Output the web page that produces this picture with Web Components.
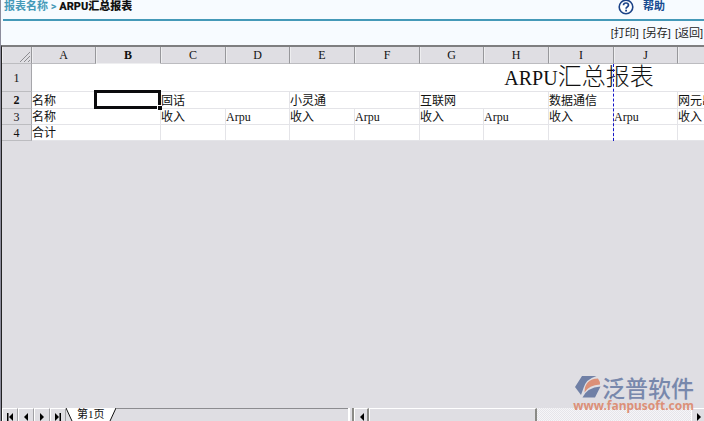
<!DOCTYPE html>
<html lang="zh-CN">
<head>
<meta charset="utf-8">
<title>ARPU汇总报表</title>
<style>
html, body { margin: 0; height: 100%; overflow: hidden; }
</style>
</head>
<body>
<report-page></report-page>

<template id="page-tpl">
<style>
:host { display: flex; flex-direction: column; height: 100vh; overflow: hidden; background: #f7fbff; border-left: 1px solid #8c8c9c; box-sizing: border-box; font: 12px/16px "Liberation Sans", "Noto Sans CJK SC", sans-serif; color: #111; }
sheet-grid { flex: 1; min-height: 0; }
</style>
<report-header></report-header>
<report-actions></report-actions>
<sheet-grid></sheet-grid>
<sheet-footer></sheet-footer>
<brand-mark></brand-mark>
</template>

<template id="header-tpl">
<style>
:host { display: flex; justify-content: space-between; align-items: flex-start; height: 19px; border-bottom: 2px solid #4499b8; margin-left: 2px; padding: 0 39px 0 1px; box-sizing: content-box; font-family: Roboto, "Noto Sans CJK SC", sans-serif; font-size: 11px; line-height: 14px; font-weight: bold; white-space: nowrap; }
nav a { color: #4499b8; text-decoration: none; }
nav span { color: #4499b8; }
b { color: #111; }
.help { display: flex; gap: 9px; color: #174c91; text-decoration: none; }
svg { display: block; width: 16px; height: 16px; margin-top: -1px; }
</style>
<nav><a href="#">报表名称</a> <span>&gt;</span> <b>ARPU汇总报表</b></nav>
<a class="help" href="#"><svg viewBox="0 0 16 16"><circle cx="8" cy="8" r="6.8" fill="#fff" stroke="#1c4388" stroke-width="1.6"/><path d="M5.5 6.2Q5.6 4 8 4T10.5 6.1Q10.5 7.2 9.2 7.9Q8.1 8.5 8.1 9.7" fill="none" stroke="#1c4388" stroke-width="1.7"/><rect x="7.2" y="10.7" width="1.8" height="1.8" fill="#1c4388"/></svg><span>帮助</span></a>
</template>

<template id="actions-tpl">
<style>
:host { display: flex; justify-content: flex-end; align-items: center; gap: 4px; height: 24px; padding-right: 1px; color: #222; }
button { all: unset; cursor: pointer; font-size: 11px; line-height: 16px; white-space: nowrap; }
</style>
<button>[打印]</button><button>[另存]</button><button>[返回]</button>
</template>

<template id="grid-tpl">
<style>
:host { display: block; overflow: hidden; background: #dfdee3; border-top: 2px solid #7e7e80; border-left: 1px solid #222; font: 12px/14px "Liberation Serif", "Noto Sans CJK SC", serif; color: #111; }
table { border-collapse: separate; border-spacing: 0; table-layout: fixed; width: 0; }
th, td { padding: 0; box-sizing: border-box; white-space: nowrap; }
th { background: #dfdee3; font-weight: normal; text-align: center; border-right: 1px solid #a6a6aa; border-bottom: 1px solid #bcbcc0; }
thead th { height: 17px; border-right-color: #97979b; box-shadow: inset 1px 0 #eeeef0; }
th.on { font-weight: bold; }
thead th.on { border-bottom-color: #eeeef0; }
td { background: #fff; border-right: 1px solid #e4e4e8; border-bottom: 1px solid #e4e4e8; position: relative; overflow: hidden; vertical-align: bottom; }
tr { height: 16px; }
tr.r1 { height: 28px; }
tr.r2 { height: 17px; }
.title { font-size: 20px; line-height: 26px; text-align: center; vertical-align: middle; padding-right: 4px; }
.title span { font-size: 24px; font-weight: 300; }
td.sel { overflow: visible; z-index: 1; }
.sel i { position: absolute; inset: -2px -1px -1px -2px; border: 3px solid #0b0b0d; }
.sel i::after { content: ""; position: absolute; right: -4px; bottom: -4px; width: 4px; height: 4px; background: #0b0b0d; border-top: 1px solid #fff; border-left: 1px solid #fff; }
.wrap { position: relative; width: max-content; }
.break { position: absolute; top: 17px; bottom: 0; left: 611px; border-left: 1px dashed #1616c8; }
svg { display: block; width: 12px; height: 12px; margin: 3px 0 0 auto; }
</style>
<div class="wrap"><table></table><div class="break"></div></div>
</template>

<template id="footer-tpl">
<style>
:host { display: flex; height: 13px; background: #dfdee3; border-left: 1px solid #222; overflow: hidden; }
button { all: unset; box-sizing: border-box; width: 16px; height: 13px; background: #dfdee3; border-right: 1px solid #a0a0a4; border-top: 1px solid #fff; border-left: 1px solid #fff; flex: none; }
svg { display: block; }
button svg { width: 8px; height: 8px; margin: 3px 0 0 3px; }
.tabs { flex: 0 0 282px; display: flex; border-top: 1px solid #8c8c90; box-sizing: border-box; }
.tab { display: flex; width: auto; border: 0; background: none; height: 13px; margin-top: -1px; font: 11px/13px "Liberation Serif", "Noto Sans CJK SC", serif; color: #111; }
.tab svg { width: 10px; height: 13px; margin: 0; }
.tab span { background: #fff; padding: 0 1px; }
.split { flex: 0 0 6px; border-left: 2px solid #fff; border-right: 2px solid #8a8a86; box-sizing: border-box; }
.bar { flex: 1; display: flex; background: repeating-conic-gradient(#f6f6f8 0 25%, #e6e5ea 0 50%) 0 0 / 2px 2px; }
.thumb { flex: 0 0 48%; box-sizing: border-box; background: #dfdee3; border: solid #fff; border-width: 1px 0 0 1px; border-right: 2px solid #8a8a86; }
.bar button { width: 15px; border-right: 2px solid #8a8a86; }
.bar button:last-child { width: 13px; border-right: 0; }
.track { flex: 1; }
</style>
<button aria-label="首页"><svg viewBox="0 0 8 8"><path d="M1 0h1.5v8H1zM7 0v8L3 4z"/></svg></button>
<button aria-label="上一页"><svg viewBox="0 0 8 8"><path d="M6 0v8L2 4z"/></svg></button>
<button aria-label="下一页"><svg viewBox="0 0 8 8"><path d="M2 0v8l4-4z"/></svg></button>
<button aria-label="末页"><svg viewBox="0 0 8 8"><path d="M5.5 0H7v8H5.5zM1 0v8l4-4z"/></svg></button>
<div class="tabs"><button class="tab"><svg viewBox="0 0 10 13"><path d="M0 0h10v13H6z" fill="#fff"/><path d="M0 0l6 13" stroke="#111"/></svg><span>第1页</span><svg viewBox="0 0 10 13"><path d="M0 0h10L4 13H0z" fill="#fff"/><path d="M10 0L4 13" stroke="#111"/></svg></button></div>
<div class="split"></div>
<div class="bar"><button aria-label="向左"><svg viewBox="0 0 8 8"><path d="M6 0v8L2 4z"/></svg></button><div class="thumb"></div><div class="track"></div><button aria-label="向右"><svg viewBox="0 0 8 8"><path d="M2 0v8l4-4z"/></svg></button></div>
</template>

<template id="brand-tpl">
<style>
:host { position: absolute; right: 10px; bottom: 9px; display: grid; justify-items: end; color: #7888ac; z-index: 2; }
.row { display: flex; align-items: center; gap: 1px; font: 500 23px/26px "Noto Sans CJK SC", sans-serif; }
svg { width: 26px; height: 24px; }
a { font: bold 12px/12px "Noto Sans", sans-serif; color: #dc9078; text-decoration: none; }
</style>
<div class="row"><svg viewBox="0 0 26 24"><path d="M7 1h14.5Q11 4 8.5 13L6 20 0 12z" fill="#7080a6"/><path d="M9.5 17.5Q9.500 4 23 3.500 25.500 7 25 9.500 14 10 9.500 17.500z" fill="#dc9078"/><path d="M7.5 22.5Q12 12.5 25.5 11.5L20 22.5z" fill="#7080a6"/></svg><span>泛普软件</span></div>
<a href="#">www.fanpusoft.com</a>
</template>

<script>
const define = (name, tpl, setup) => customElements.define(name, class extends HTMLElement {
  constructor() {
    super();
    const root = this.attachShadow({ mode: "open" });
    root.append(document.getElementById(tpl).content.cloneNode(true));
    if (setup) setup(root);
  }
});
define("report-header", "header-tpl");
define("report-actions", "actions-tpl");
define("sheet-footer", "footer-tpl");
define("brand-mark", "brand-tpl");
define("sheet-grid", "grid-tpl", root => {
  const letters = [..."ABCDEFGHIJ", ...Array(7).fill("")];
  const widths = [64, 65, 65];
  const groups = ["固话", "小灵通", "互联网", "数据通信", "网元出"];
  let h = '<colgroup><col style="width:30px">' + letters.map((_, i) => `<col style="width:${widths[i % 3]}px">`).join("") + "</colgroup>";
  h += '<thead><tr><th><svg viewBox="0 0 12 12" stroke="#8c8c90" fill="none"><path d="M1 11L11 1M5 11l6-6M9 11l2-2"/></svg></th>' + letters.map(l => `<th${l === "B" ? ' class="on"' : ""}>${l}</th>`).join("") + "</tr></thead><tbody>";
  h += '<tr class="r1"><th>1</th><td class="title" colspan="17">ARPU<span>汇总报表</span></td></tr>';
  h += '<tr class="r2"><th class="on">2</th><td>名称</td><td class="sel"><i></i></td>' + groups.map(g => `<td colspan="2">${g}</td>`).join("") + '<td colspan="5"></td></tr>';
  h += "<tr><th>3</th><td colspan=\"2\">名称</td>" + letters.slice(2).map((_, i) => `<td>${i > 8 ? "" : i % 2 ? "Arpu" : "收入"}</td>`).join("") + "</tr>";
  h += "<tr><th>4</th><td colspan=\"2\">合计</td>" + "<td></td>".repeat(15) + "</tr></tbody>";
  root.querySelector("table").innerHTML = h;
});
define("report-page", "page-tpl");
</script>
</body>
</html>
